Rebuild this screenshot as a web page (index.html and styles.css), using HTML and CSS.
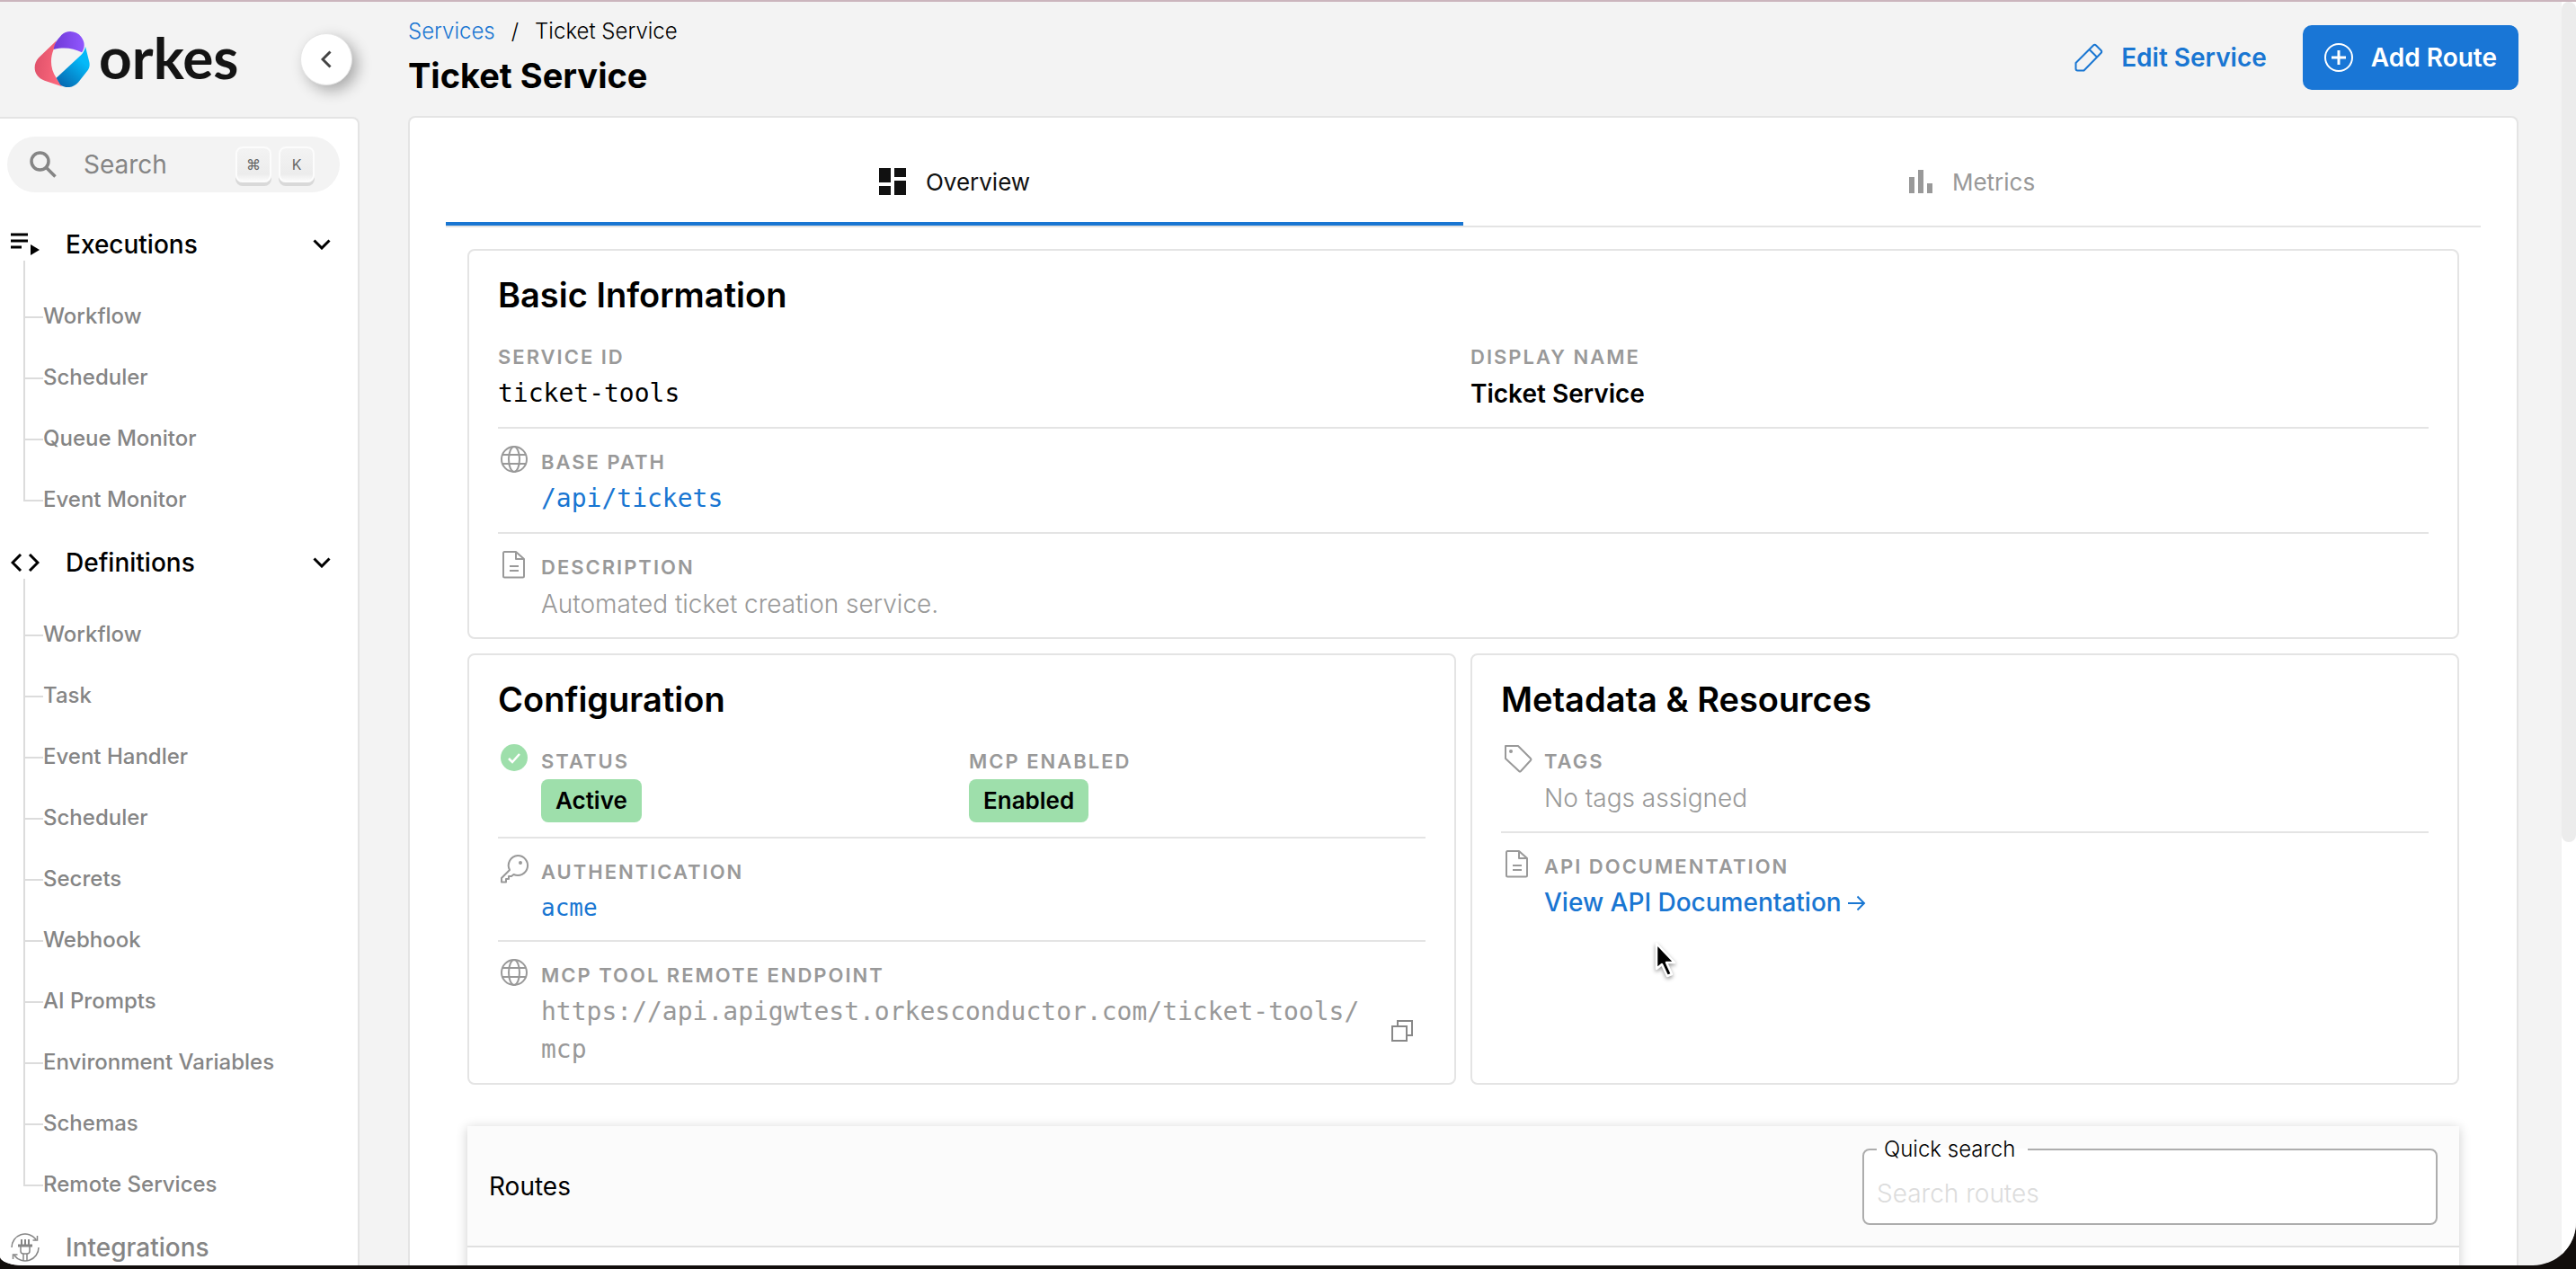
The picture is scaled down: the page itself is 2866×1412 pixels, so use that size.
FILE: index.html
```
<!DOCTYPE html>
<html lang="en">
<head>
  <meta charset="UTF-8">
  <title>Ticket Service</title>
  <link rel="stylesheet" href="styles.css">
</head>
<body>
<!-- shared icons -->
<svg class="sprite" aria-hidden="true">
  <symbol id="chevron" viewBox="0 0 20 12"><path d="M1.5 1.5 10 10l8.500-8.500" fill="none" stroke="currentColor" stroke-width="3"/></symbol>
  <symbol id="globe" viewBox="0 0 36 36"><g fill="none" stroke="currentColor" stroke-width="2"><circle cx="18" cy="17" r="14"/><ellipse cx="18" cy="17" rx="6" ry="14"/><path d="M5 12h26M5 22h26"/></g></symbol>
  <symbol id="doc" viewBox="0 0 36 36"><path d="M7 3h13l9 8v19a1.500 1.500 0 0 1-1.500 1.500h-20A1.500 1.500 0 0 1 6 30V4.500A1.500 1.500 0 0 1 7 3zM20 3v8h9M13 19h10M13 24h10" fill="none" stroke="currentColor" stroke-width="2" stroke-linejoin="round"/></symbol>
</svg>

<div class="app">
  <aside class="sidebar">
    <div class="brand">
      <a class="logo" href="#">
        <svg width="62" height="62" viewBox="0 0 184 186">
          <defs>
            <linearGradient id="red" x1="0" y1="0.500" x2="1" y2="0.700"><stop offset="0" stop-color="#e0526a"/><stop offset="1" stop-color="#ff6a7f"/></linearGradient>
            <linearGradient id="purple" x1="0" y1="0" x2="1" y2="0"><stop offset="0" stop-color="#6f3ad6"/><stop offset="1" stop-color="#9157ff"/></linearGradient>
            <linearGradient id="blue" x1="0.700" y1="0.300" x2="0.200" y2="1"><stop offset="0" stop-color="#04b9f8"/><stop offset="1" stop-color="#0668b0"/></linearGradient>
          </defs>
          <path d="M74 30 14 88C-8 112-3 152 34 164l58 20-19-29C52 124 52 90 64 60z" fill="url(#red)"/>
          <path d="M64 60C66 44 72 32 90 12c18-18 50-15 66 6 12 16 14 34 2 52-30-15-60-18-94-10z" fill="url(#purple)"/>
          <path d="M170 50l13 52c2 10 1 18-4 26l-33 42c-16 18-42 22-60 8L73 155l84-78c7-8 11-17 13-27z" fill="url(#blue)"/>
        </svg>
        <span class="logo-text">orkes</span>
      </a>
      <button class="collapse" aria-label="Collapse sidebar"><svg width="12" height="20" viewBox="0 0 12 20"><path d="M10.500 1.500 2 10l8.500 8.500" fill="none" stroke="#444" stroke-width="3"/></svg></button>
    </div>

    <nav class="menu">
      <label class="search">
        <svg width="30" height="30" viewBox="0 0 30 30" fill="none" stroke="#858585" stroke-width="3.500"><circle cx="11.500" cy="11.500" r="9.500"/><path d="m18.500 18.500 10 10"/></svg>
        <input type="text" placeholder="Search" aria-label="Search">
        <kbd>⌘</kbd>
        <kbd>K</kbd>
      </label>

      <button class="group">
        <svg width="32" height="26" viewBox="0 0 32 26"><path d="M0 2h19M0 9h19M0 16h12" stroke="#000" stroke-width="3"/><path d="M22 13v12l10-6z"/></svg>
        <span>Executions</span>
        <svg width="20" height="12"><use href="#chevron"/></svg>
      </button>
      <ul class="tree">
        <li><a href="#">Workflow</a></li>
        <li><a href="#">Scheduler</a></li>
        <li><a href="#">Queue Monitor</a></li>
        <li><a href="#">Event Monitor</a></li>
      </ul>

      <button class="group">
        <svg width="32" height="20" viewBox="0 0 32 20"><path d="M11 1 2 10l9 9M21 1l9 9-9 9" fill="none" stroke="#000" stroke-width="3"/></svg>
        <span>Definitions</span>
        <svg width="20" height="12"><use href="#chevron"/></svg>
      </button>
      <ul class="tree">
        <li><a href="#">Workflow</a></li>
        <li><a href="#">Task</a></li>
        <li><a href="#">Event Handler</a></li>
        <li><a href="#">Scheduler</a></li>
        <li><a href="#">Secrets</a></li>
        <li><a href="#">Webhook</a></li>
        <li><a href="#">AI Prompts</a></li>
        <li><a href="#">Environment Variables</a></li>
        <li><a href="#">Schemas</a></li>
        <li><a href="#">Remote Services</a></li>
      </ul>

      <button class="group muted">
        <svg width="32" height="32" viewBox="0 0 32 32" fill="none" stroke="currentColor" stroke-width="1.500"><path d="M1 16A15 15 0 0 1 28 7M31 16A15 15 0 0 1 4 25M29.500 3v5h-5M2.500 29v-5h5"/><path d="M8 14h16" stroke-width="3"/><path d="M11 15v5q0 3 3 3h4q3 0 3-3v-5M14 23v8M18 23v8"/><path d="M12 7v6M16 7v6M20 7v6" stroke-width="2"/></svg>
        <span>Integrations</span>
      </button>
    </nav>
  </aside>

  <main class="main">
    <header class="top">
      <div>
        <div class="crumbs"><a href="#">Services</a><span>/</span><span>Ticket Service</span></div>
        <h1>Ticket Service</h1>
      </div>
      <div class="actions">
        <button class="btn">
          <svg width="32" height="32" viewBox="0 0 32 32" fill="none" stroke="currentColor" stroke-width="2" stroke-linejoin="round"><path d="M1.500 22 21 2.500q1.500-1.500 3 0L29.500 8q1.500 1.500 0 3L10.500 30.500h-7q-2 0-2-2zM16.500 7l8.500 8.500"/></svg>
          Edit Service
        </button>
        <button class="btn primary">
          <svg width="32" height="32" viewBox="0 0 32 32" fill="none" stroke="currentColor"><circle cx="16" cy="16" r="15" stroke-width="2"/><path d="M16 8v16M8 16h16" stroke-width="3"/></svg>
          Add Route
        </button>
      </div>
    </header>

    <section class="panel">
      <div class="tabs" role="tablist">
        <button class="tab active" role="tab" aria-selected="true">
          <svg width="30" height="30" viewBox="0 0 30 30" fill="currentColor"><path d="M0 0h13v16H0zM0 20h13v10H0zM17 0h13v10H17zM17 14h13v16H17z"/></svg>
          Overview
        </button>
        <button class="tab" role="tab" aria-selected="false">
          <svg width="26" height="28" viewBox="0 0 26 28" fill="currentColor"><path d="M0 9h6v18H0zM10 1h6v26h-6zM20 16h6v11h-6z"/></svg>
          Metrics
        </button>
      </div>

      <div class="content">
        <div class="card">
          <h2>Basic Information</h2>
          <div class="row cols">
            <div>
              <div class="label">Service ID</div>
              <div class="value mono">ticket-tools</div>
            </div>
            <div>
              <div class="label">Display Name</div>
              <div class="value name">Ticket Service</div>
            </div>
          </div>
          <div class="row item">
            <svg class="icon"><use href="#globe"/></svg>
            <div>
              <div class="label">Base Path</div>
              <div class="value mono blue">/api/tickets</div>
            </div>
          </div>
          <div class="row item">
            <svg class="icon"><use href="#doc"/></svg>
            <div>
              <div class="label">Description</div>
              <div class="value">Automated ticket creation service.</div>
            </div>
          </div>
        </div>

        <div class="pair">
          <div class="card">
            <h2>Configuration</h2>
            <div class="row cols">
              <div class="item">
                <svg class="icon" viewBox="0 0 36 36"><circle cx="18" cy="16" r="15" fill="#9edfab"/><path d="m12 17 4 4 8-9" fill="none" stroke="#fff" stroke-width="2.500"/></svg>
                <div>
                  <div class="label">Status</div>
                  <span class="badge">Active</span>
                </div>
              </div>
              <div>
                <div class="label">MCP Enabled</div>
                <span class="badge">Enabled</span>
              </div>
            </div>
            <div class="row item">
              <svg class="icon" viewBox="0 0 36 36" fill="none" stroke="currentColor" stroke-width="2" stroke-linejoin="round"><path d="M22 2a11 11 0 1 1-4.500 21l-2.500 2h-3v3H9v3.500H4V27l9-9A11 11 0 0 1 22 2z"/><circle cx="25" cy="10" r="1"/></svg>
              <div>
                <div class="label">Authentication</div>
                <div class="value small mono"><a href="#">acme</a></div>
              </div>
            </div>
            <div class="row item">
              <svg class="icon"><use href="#globe"/></svg>
              <div class="grow">
                <div class="label">MCP Tool Remote Endpoint</div>
                <div class="endpoint">
                  <div class="value mono">https://api.apigwtest.orkesconductor.com/ticket-tools/<wbr>mcp</div>
                  <button class="copy" aria-label="Copy"><svg width="24" height="24" viewBox="0 0 24 24" fill="none" stroke="currentColor" stroke-width="2"><path d="M1 7h16v16H1zM7 7V1h16v16h-6"/></svg></button>
                </div>
              </div>
            </div>
          </div>

          <div class="card">
            <h2>Metadata &amp; Resources</h2>
            <div class="row item">
              <svg class="icon" viewBox="0 0 36 36" fill="none" stroke="currentColor" stroke-width="2" stroke-linejoin="round"><path d="M5 3h14l14 14q1 1 0 2L22 31q-1 1-2 0L5 17z"/><circle cx="11" cy="9" r="1"/></svg>
              <div>
                <div class="label">Tags</div>
                <div class="value">No tags assigned</div>
              </div>
            </div>
            <div class="row item">
              <svg class="icon"><use href="#doc"/></svg>
              <div>
                <div class="label">API Documentation</div>
                <div class="value small"><a class="doclink" href="#">View API Documentation <svg width="20" height="18" viewBox="0 0 20 18" fill="none" stroke="currentColor" stroke-width="2"><path d="M0 9h18M10.500 1.500 18 9l-7.500 7.500"/></svg></a></div>
              </div>
            </div>
          </div>
        </div>

        <div class="routes">
          <div class="routes-head">
            <h3>Routes</h3>
            <fieldset class="field">
              <legend><label for="quick">Quick search</label></legend>
              <input type="text" id="quick" placeholder="Search routes">
            </fieldset>
          </div>
        </div>
      </div>
    </section>
  </main>

  <div class="scrollbar"><div class="thumb"></div></div>

  <svg class="pointer" width="26" height="40" viewBox="0 0 26 40"><path d="M2 2v28l6-5 6 13 5-2-6-13h9z" fill="#000" stroke="#fff" stroke-width="2.500" stroke-linejoin="round"/></svg>
</div>
</body>
</html>
```
FILE: styles.css
```
* {
  box-sizing: border-box;
}

body {
  margin: 0;
  height: 100vh;
  padding-bottom: 4px;
  overflow: hidden;
  background: #120e0c;
  font-family: Inter, "Open Sans", sans-serif;
  font-size: 28px;
  color: #000;
}

button, input {
  font: inherit;
  color: inherit;
  border: 0;
  background: none;
  padding: 0;
}

button {
  cursor: pointer;
}

a {
  color: #1976d2;
  text-decoration: none;
}

h1, h2, h3, ul {
  margin: 0;
  padding: 0;
}

.sprite {
  position: absolute;
  width: 0;
  height: 0;
}

.app {
  position: relative;
  display: flex;
  height: 100%;
  overflow: hidden;
  background: #f3f3f3;
  border-top: 2px solid #cbb5bd;
  border-radius: 0 0 48px 26px / 0 0 48px 10px;
}

/* sidebar */
.sidebar {
  display: flex;
  flex-direction: column;
  flex: none;
  width: 400px;
}

.brand {
  display: flex;
  align-items: center;
  justify-content: space-between;
  flex: none;
  height: 128px;
  padding: 0 8px 0 38px;
}

.logo {
  display: flex;
  align-items: center;
  gap: 10px;
  color: #141414;
}

.logo-text {
  padding-bottom: 4px;
  font: bold 64px/72px Lato, sans-serif;
}

.collapse {
  display: flex;
  align-items: center;
  justify-content: center;
  width: 58px;
  height: 58px;
  border: 1px solid #e6e6e6;
  border-radius: 50%;
  background: #fff;
  box-shadow: 6px 6px 16px rgba(0, 0, 0, 0.3);
}

.menu {
  flex: 1;
  min-height: 0;
  padding: 20px 20px 0 8px;
  overflow: hidden;
  background: #fff;
  border: 2px solid #e4e4e4;
  border-left: 0;
  border-bottom: 0;
  border-radius: 0 8px 0 0;
}

.search {
  display: flex;
  align-items: center;
  gap: 8px;
  height: 62px;
  margin-bottom: 22px;
  padding: 0 28px 0 25px;
  border-radius: 31px;
  background: #f3f3f3;
}

.search input {
  flex: 1;
  min-width: 0;
  margin-left: 22px;
  outline: none;
}

.search input::placeholder {
  color: #858585;
  opacity: 1;
}

kbd {
  width: 40px;
  height: 40px;
  border: 2px solid #fcfcfc;
  border-radius: 8px;
  background: linear-gradient(#f3f3f3, #ececec 80%, #fafafa);
  box-shadow: 0 4px 0 #d9d9d9;
  font: 16px/36px Inter, "DejaVu Sans", sans-serif;
  text-align: center;
  color: #666;
}

.group {
  display: flex;
  align-items: center;
  width: 100%;
  height: 72px;
  padding: 0 10px 0 4px;
  font-weight: 500;
  text-align: left;
}

.group span {
  flex: 1;
  margin-left: 29px;
}

.muted {
  color: #858585;
}

.tree {
  padding-top: 10px;
  list-style: none;
}

.tree li {
  position: relative;
  height: 68px;
  padding-left: 40px;
  font-size: 24px;
  font-weight: 500;
  line-height: 68px;
}

/* branch line from the previous item down to this one */
.tree li::before {
  content: "";
  position: absolute;
  left: 18px;
  top: -36px;
  width: 20px;
  height: 70px;
  border: 2px solid #dcdcdc;
  border-width: 0 0 2px 2px;
}

.tree li:first-child::before {
  top: -28px;
  height: 62px;
}

.tree a {
  color: #858585;
}

/* main column */
.main {
  display: flex;
  flex-direction: column;
  flex: 1;
  min-width: 0;
  padding: 0 48px 0 54px;
}

.top {
  display: flex;
  justify-content: space-between;
  flex: none;
  height: 127px;
  padding-top: 16px;
}

.crumbs {
  display: flex;
  gap: 18px;
  font-size: 24px;
  font-weight: 300;
  line-height: 34px;
}

h1 {
  font-size: 38px;
  font-weight: 700;
  line-height: 64px;
}

.actions {
  display: flex;
  gap: 16px;
  padding-top: 10px;
}

.btn {
  display: flex;
  align-items: center;
  gap: 20px;
  height: 72px;
  padding: 0 24px;
  border-radius: 10px;
  font-weight: 600;
  color: #1976d2;
}

.btn.primary {
  background: #1976d6;
  color: #fff;
}

.panel {
  flex: 1;
  min-height: 0;
  padding: 22px 40px 0;
  overflow: hidden;
  background: #fff;
  border: 2px solid #e4e4e4;
  border-bottom: 0;
  border-radius: 8px 8px 0 0;
}

.tabs {
  display: flex;
  height: 100px;
  border-bottom: 2px solid #e4e4e4;
}

.tab {
  display: flex;
  align-items: center;
  justify-content: center;
  flex: 1;
  gap: 22px;
  padding-top: 4px;
  border-bottom: 4px solid transparent;
  font-size: 26px;
  color: #999;
}

.tab.active {
  color: #111;
  border-color: #1976d2;
}

.content {
  padding: 24px 24px 0;
}

.card {
  flex: 1;
  min-width: 0;
  padding: 24px 32px 0;
  border: 2px solid #e4e4e4;
  border-radius: 8px;
}

h2 {
  margin-bottom: 24px;
  font-size: 38px;
  font-weight: 600;
  line-height: 50px;
}

.pair {
  display: flex;
  gap: 16px;
  margin-top: 16px;
}

.row {
  padding: 17px 0 16px;
  border-bottom: 2px solid #e4e4e4;
}

h2 + .row {
  padding-top: 0;
}

.row:last-child {
  border-bottom: 0;
}

.cols {
  display: grid;
  grid-template-columns: 1fr 1fr;
  gap: 16px;
}

.item {
  display: flex;
  gap: 12px;
}

.icon {
  flex: none;
  width: 36px;
  height: 36px;
  color: #999;
}

.grow {
  flex: 1;
}

.label {
  font-size: 22px;
  font-weight: 600;
  line-height: 40px;
  letter-spacing: 2px;
  text-transform: uppercase;
  color: #999;
}

.value {
  font-weight: 300;
  line-height: 42px;
  color: #999;
}

.value.small {
  font-size: 26px;
  line-height: 40px;
}

.mono {
  font-family: "DejaVu Sans Mono", monospace;
  font-weight: 400;
}

.cols .mono {
  color: #000;
}

.value.name {
  font-weight: 600;
  color: #000;
}

.value.blue {
  color: #1976d2;
}

.doclink {
  font-size: 28px;
  font-weight: 500;
}

.badge {
  display: block;
  width: fit-content;
  height: 48px;
  padding: 0 16px;
  border-radius: 8px;
  background: #9edfab;
  font-size: 26px;
  font-weight: 600;
  line-height: 48px;
}

.endpoint {
  display: flex;
  align-items: center;
}

.endpoint .value {
  flex: 1;
}

.copy {
  display: flex;
  justify-content: center;
  width: 52px;
  color: #888;
}

/* routes table */
.routes {
  height: 400px;
  margin-top: 46px;
  background: #fff;
  box-shadow: 0 2px 12px rgba(0, 0, 0, 0.2);
}

.routes-head {
  display: flex;
  align-items: center;
  justify-content: space-between;
  height: 135px;
  padding: 0 24px;
  background: #fbfbfb;
  border-bottom: 2px solid #e0e0e0;
}

h3 {
  font-size: 28px;
  font-weight: 400;
}

.field {
  width: 640px;
  height: 96px;
  margin: 0 0 10px;
  padding: 0 14px;
  border: 2px solid #adadad;
  border-radius: 8px;
  background: #fff;
}

.field legend {
  padding: 0 14px 0 8px;
  font-size: 24px;
  font-weight: 300;
  line-height: 24px;
}

.field input {
  width: 100%;
  height: 70px;
  padding-top: 4px;
  outline: none;
  font-weight: 300;
}

.field input::placeholder {
  color: #dcdcdc;
  opacity: 1;
}

.scrollbar {
  flex: none;
  width: 16px;
  background: #fff;
}

.thumb {
  height: 66.5%;
  border-radius: 8px;
  background: #ececec;
}

.pointer {
  position: absolute;
  left: 1841px;
  top: 1046px;
  filter: drop-shadow(0 2px 2px rgba(0, 0, 0, 0.4));
}
```
